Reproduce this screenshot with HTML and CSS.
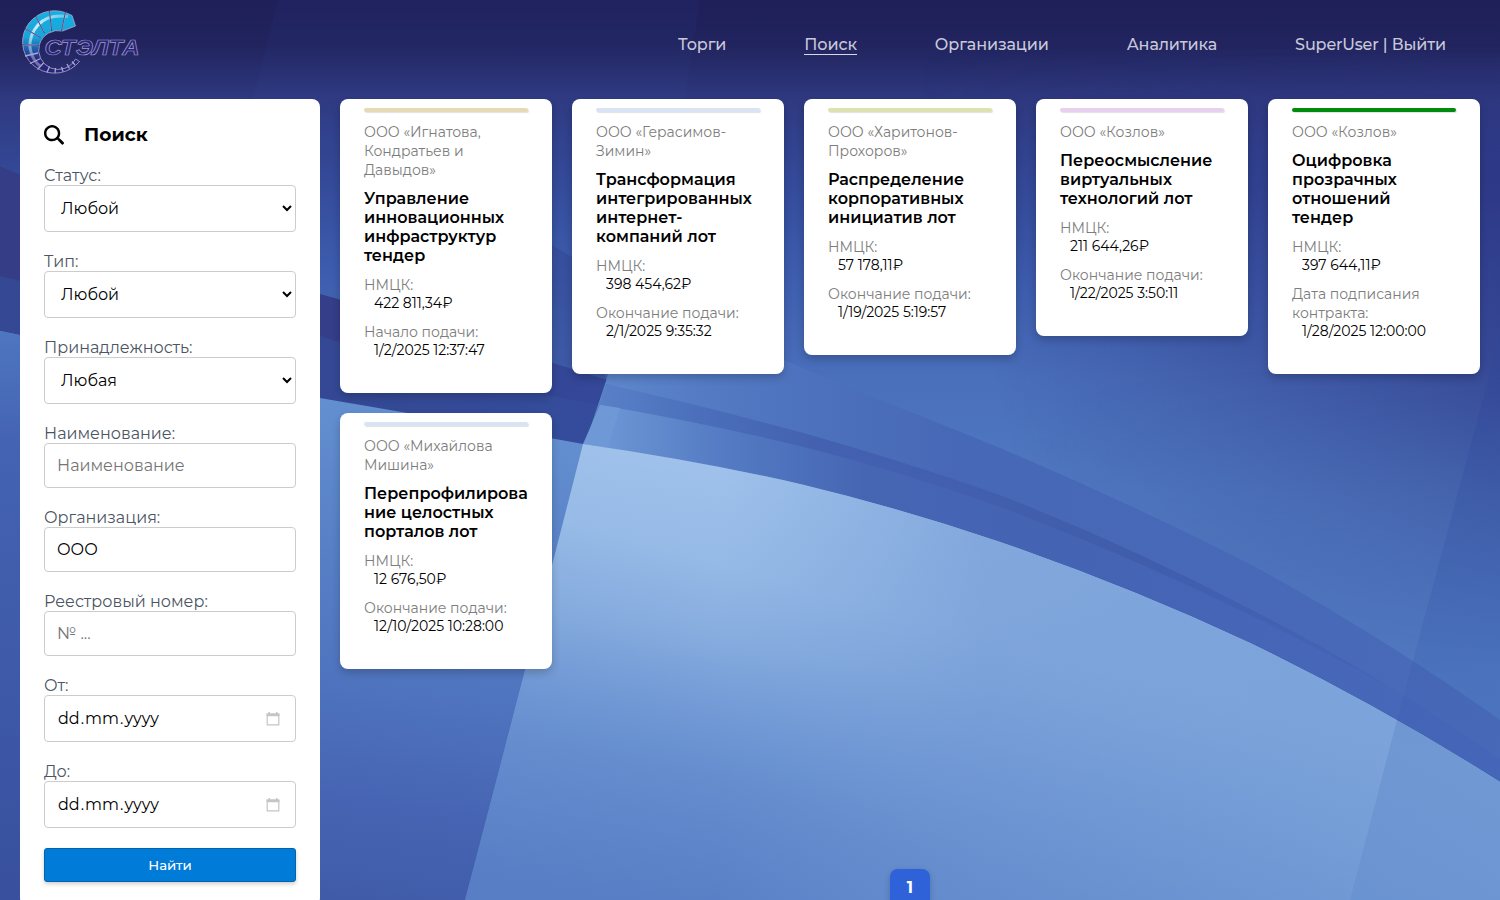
FILE: index.html
```html
<!DOCTYPE html>
<html lang="ru">
<head>
<meta charset="utf-8">
<title>Поиск</title>
<link rel="stylesheet" href="styles.css">
</head>
<body>
<svg class="backdrop" viewBox="0 0 1500 900" preserveAspectRatio="none" aria-hidden="true">
  <defs>
    <linearGradient id="sky" x1="0" y1="0" x2="0" y2="1">
      <stop offset="0" stop-color="#1f1f5a"/><stop offset=".05" stop-color="#21245e"/><stop offset=".11" stop-color="#2f3980"/>
      <stop offset=".2" stop-color="#344a99"/><stop offset=".3" stop-color="#3d5cad"/><stop offset=".42" stop-color="#4a6fbb"/><stop offset=".55" stop-color="#5079c1"/><stop offset="1" stop-color="#5279c2"/>
    </linearGradient>
    <linearGradient id="edge" gradientUnits="userSpaceOnUse" x1="1000" y1="400" x2="1500" y2="270">
      <stop offset="0" stop-color="#2a2f7c" stop-opacity="0"/><stop offset="1" stop-color="#2a2f7c" stop-opacity=".62"/>
    </linearGradient>
    <linearGradient id="fade" x1="0" y1="0" x2="0" y2="1"><stop offset=".05" stop-color="#000"/><stop offset=".2" stop-color="#fff"/><stop offset=".4" stop-color="#fff"/><stop offset=".75" stop-color="#000"/></linearGradient>
    <mask id="upper"><rect width="1500" height="900" fill="url(#fade)"/></mask>
    <linearGradient id="ribbon" gradientUnits="userSpaceOnUse" x1="590" y1="0" x2="1500" y2="0">
      <stop offset="0" stop-color="#6089cd"/><stop offset=".12" stop-color="#547bc4"/><stop offset=".25" stop-color="#4d71bd"/><stop offset=".4" stop-color="#4768b6"/><stop offset=".8" stop-color="#4869b8"/><stop offset="1" stop-color="#4a6bb9"/>
    </linearGradient>
    <linearGradient id="ribbonLow" gradientUnits="userSpaceOnUse" x1="590" y1="0" x2="1500" y2="0">
      <stop offset="0" stop-color="#6f99d6"/><stop offset=".14" stop-color="#557cc4"/><stop offset=".3" stop-color="#4666b4"/><stop offset=".5" stop-color="#4463b3"/><stop offset="1" stop-color="#4868ba"/>
    </linearGradient>
    <linearGradient id="strand" gradientUnits="userSpaceOnUse" x1="590" y1="0" x2="1500" y2="0">
      <stop offset="0" stop-color="#5a82c8"/><stop offset=".12" stop-color="#4b6fbb"/><stop offset=".25" stop-color="#4361b0"/><stop offset=".6" stop-color="#405dac"/><stop offset="1" stop-color="#4868ba"/>
    </linearGradient>
    <linearGradient id="hill" gradientUnits="userSpaceOnUse" x1="420" y1="400" x2="340" y2="900">
      <stop offset="0" stop-color="#6490d0"/><stop offset=".35" stop-color="#567ec5"/><stop offset=".55" stop-color="#5075c0"/><stop offset=".8" stop-color="#4664b3"/><stop offset="1" stop-color="#405ca9"/>
    </linearGradient>
    <linearGradient id="left" gradientUnits="userSpaceOnUse" x1="0" y1="330" x2="0" y2="900">
      <stop offset="0" stop-color="#4f76c0"/><stop offset=".2" stop-color="#4463b3"/><stop offset="1" stop-color="#38509e"/>
    </linearGradient>
    <linearGradient id="lit" gradientUnits="userSpaceOnUse" x1="700" y1="450" x2="620" y2="900">
      <stop offset="0" stop-color="#a0c2eb"/><stop offset=".4" stop-color="#8fb4e3"/><stop offset=".65" stop-color="#729ad6"/><stop offset="1" stop-color="#4b6dba"/>
    </linearGradient>
    <linearGradient id="litRight" gradientUnits="userSpaceOnUse" x1="720" y1="0" x2="1380" y2="0">
      <stop offset="0" stop-color="#7ba3da" stop-opacity="0"/><stop offset=".4" stop-color="#789fd8" stop-opacity=".75"/><stop offset="1" stop-color="#7ca4da"/>
    </linearGradient>
    <linearGradient id="low" gradientUnits="userSpaceOnUse" x1="1150" y1="680" x2="1080" y2="940">
      <stop offset="0" stop-color="#5f88cb" stop-opacity="0"/><stop offset="1" stop-color="#5f88cb" stop-opacity=".65"/>
    </linearGradient>
    <linearGradient id="dusk" gradientUnits="userSpaceOnUse" x1="0" y1="180" x2="600" y2="420">
      <stop offset="0" stop-color="#343d86"/><stop offset=".6" stop-color="#343e89"/><stop offset="1" stop-color="#34489a"/>
    </linearGradient>
    <linearGradient id="shade" gradientUnits="userSpaceOnUse" x1="0" y1="400" x2="0" y2="900">
      <stop offset="0" stop-color="#2c459a" stop-opacity=".3"/><stop offset="1" stop-color="#3a68b8" stop-opacity=".12"/>
    </linearGradient>
  </defs>
  <rect width="1500" height="900" fill="url(#sky)"/>
  <rect width="1500" height="900" fill="url(#edge)" mask="url(#upper)"/>
  <path d="M278 0 L700 0 L677 150 L240 150Z" fill="#3c5cae" opacity=".07"/>
  <path d="M540 238 L580 262 L607 382 L540 370Z" fill="#30438f" opacity=".45"/>
  <path d="M0 166 Q170 240 320 294 Q450 330 607 380 L583 450 L0 400Z" fill="url(#dusk)"/>
  <path d="M0 276 Q160 318 320 336 Q450 378 600 405 L583 444 L320 398 L0 331Z" fill="#35509d" opacity=".6"/>
  <path d="M612 363 Q700 340 784 360 C860 393 920 415 1000 448 Q1130 503 1250 564 Q1380 635 1500 720 V800 L583 450Z" fill="url(#ribbon)"/>
  <path d="M606 384 Q700 405 800 432 Q900 460 1000 495 Q1130 546 1250 609 Q1340 655 1404 696 L1500 762 V800 L583 450Z" fill="url(#strand)"/>
  <path d="M600 405 Q700 422 800 446 Q900 471 1000 507 Q1130 556 1250 615 Q1340 659 1404 696 L1500 758 V800 L583 450 L589 444Z" fill="url(#ribbonLow)"/>
  <path d="M600 405 L583 444 L605 455 L620 408Z" fill="#6f99d6"/>
  <path d="M0 331 C160 365 240 382 320 398 Q450 420 583 444 Q700 461 800 484 Q900 508 1000 542 Q1130 587 1250 643 Q1380 706 1500 782 V900 H0Z" fill="url(#hill)"/>
  <path d="M0 331 L20 335 V900 H0Z" fill="url(#left)"/>
  <path d="M583 444 Q700 461 800 484 Q900 508 1000 542 Q1130 587 1250 643 Q1380 706 1500 782 V900 H465 Q523 680 583 444Z" fill="url(#lit)"/>
  <path d="M583 444 Q700 461 800 484 Q900 508 1000 542 Q1130 587 1250 643 Q1380 706 1500 782 V900 H465 Q523 680 583 444Z" fill="url(#litRight)"/>
  <path d="M583 444 Q700 461 800 484 Q900 508 1000 542 Q1130 587 1250 643 Q1380 706 1500 782 V900 H465 Q523 680 583 444Z" fill="url(#low)"/>
  <path d="M1500 335 L1488 380 L1397 720 L1350 900 H1500Z" fill="url(#shade)"/>
</svg>

<header class="topbar">
  <svg class="logo" viewBox="20 9 122 67" role="img" aria-label="СТЭЛТА">
    <defs>
      <linearGradient id="ring" x1="0" y1="0" x2="0" y2="1"><stop offset="0" stop-color="#14b0e2"/><stop offset=".42" stop-color="#1aa5da"/><stop offset=".62" stop-color="#1d5cae"/><stop offset=".78" stop-color="#25257c"/></linearGradient>
      <linearGradient id="shine" x1="1" y1="0" x2="0" y2="1"><stop offset="0" stop-color="#fff" stop-opacity=".3"/><stop offset=".5" stop-color="#fff" stop-opacity=".8"/><stop offset="1" stop-color="#fff" stop-opacity=".2"/></linearGradient>
    </defs>
    <path d="M66 12.800 L72 15.500 L75.500 26 L62.500 31 A19.500 19.500 0 1 0 75.500 59 L79.500 61.500 A32 31.200 0 1 1 66 12.800Z" fill="url(#ring)" stroke="#b0a6cc" stroke-width=".8"/>
    <path d="M68 16.500 Q48 14 38 25 Q29 35 30 48 Q32 60 40 66" fill="none" stroke="url(#shine)" stroke-width="3"/>
    <path class="logo-cuts" d="M65.500 13.500L61.500 30M49.500 12L51.500 29.500M36 17L44 32M26 29L39.500 37M22.500 44.500L38.500 45.500M25 56L38 53M30 63.500L40.500 58.500M37.500 69.500L43.500 63M47 72.500L49.500 66.500M55 73L55.500 68M63 71.500L61.500 67M69.500 68.500L67 64M75 65L72 61.500"/>
    <path class="logo-gap" d="M65.700 11L61.300 31.500M49.300 10L51.700 31M35.500 16L44.500 33.200M25 28.500L40.500 37.600M21 44.500L39.500 45.500"/>
    <text class="logo-text" x="44.500" y="54.500" textLength="95" lengthAdjust="spacingAndGlyphs">СТЭЛТА</text>
  </svg>
  <nav class="menu">
    <a class="menu-item">Торги</a>
    <a class="menu-item current">Поиск</a>
    <a class="menu-item">Организации</a>
    <a class="menu-item">Аналитика</a>
    <a class="menu-item">SuperUser | Выйти</a>
  </nav>
</header>

<main class="page">
  <form class="filter">
    <h3 class="filter-title">
      <svg viewBox="0 0 512 512" width="20" height="20"><path d="M505 442.700 405.300 343c-4.500-4.500-10.600-7-17-7H372c27.600-35.300 44-79.700 44-128C416 93.100 322.900 0 208 0S0 93.100 0 208s93.100 208 208 208c48.300 0 92.700-16.400 128-44l107 112c9.400 9.400 24.600 24.600 33.900 24l28.300-28.300c9.400-9.400 9.400-24.600.1-34zM208 354c-80 0-146-66-146-146S128 62 208 62s146 66 146 146-66 146-146 146z"/></svg>
      <span>Поиск</span>
    </h3>
    <div class="field"><label>Статус:</label><select class="control"><option>Любой</option></select></div>
    <div class="field"><label>Тип:</label><select class="control"><option>Любой</option></select></div>
    <div class="field"><label>Принадлежность:</label><select class="control"><option>Любая</option></select></div>
    <div class="field"><label>Наименование:</label><input class="control short" placeholder="Наименование"></div>
    <div class="field"><label>Организация:</label><input class="control short" value="ООО"></div>
    <div class="field"><label>Реестровый номер:</label><input class="control short" placeholder="№ ..."></div>
    <div class="field"><label>От:</label><div class="control date"><span><i>dd</i>.<i>mm</i>.<i>yyyy</i></span><svg viewBox="0 0 14 14" width="14" height="14"><path d="M1.200 2v10.800h11.600V2" fill="none" stroke="#c5c5c5" stroke-width="1.200"/><path d="M.6 1.200h12.800v3.100H.6zM2.500 0h1.500v2H2.500zM10 0h1.500v2H10z" fill="#c5c5c5"/></svg></div></div>
    <div class="field"><label>До:</label><div class="control date"><span><i>dd</i>.<i>mm</i>.<i>yyyy</i></span><svg viewBox="0 0 14 14" width="14" height="14"><path d="M1.200 2v10.800h11.600V2" fill="none" stroke="#c5c5c5" stroke-width="1.200"/><path d="M.6 1.200h12.800v3.100H.6zM2.500 0h1.500v2H2.500zM10 0h1.500v2H10z" fill="#c5c5c5"/></svg></div></div>
    <button class="submit" type="button">Найти</button>
  </form>

  <section class="results">
    <div class="cards">
      <article class="card sand"><p class="org">ООО «Игнатова, Кондратьев и Давыдов»</p>
        <h3 class="name">Управление инновационных инфраструктур тендер</h3>
        <dl><dt>НМЦК:</dt><dd>422 811,34₽</dd><dt>Начало подачи:</dt><dd>1/2/2025 12:37:47</dd></dl></article>
      <article class="card sky"><p class="org">ООО «Герасимов-Зимин»</p>
        <h3 class="name">Трансформация интегрированных интернет-компаний лот</h3>
        <dl><dt>НМЦК:</dt><dd>398 454,62₽</dd><dt>Окончание подачи:</dt><dd>2/1/2025 9:35:32</dd></dl></article>
      <article class="card lime"><p class="org">ООО «Харитонов-Прохоров»</p>
        <h3 class="name">Распределение корпоративных инициатив лот</h3>
        <dl><dt>НМЦК:</dt><dd>57 178,11₽</dd><dt>Окончание подачи:</dt><dd>1/19/2025 5:19:57</dd></dl></article>
      <article class="card pink"><p class="org">ООО «Козлов»</p>
        <h3 class="name">Переосмысление виртуальных технологий лот</h3>
        <dl><dt>НМЦК:</dt><dd>211 644,26₽</dd><dt>Окончание подачи:</dt><dd>1/22/2025 3:50:11</dd></dl></article>
      <article class="card green"><p class="org">ООО «Козлов»</p>
        <h3 class="name">Оцифровка прозрачных отношений тендер</h3>
        <dl><dt>НМЦК:</dt><dd>397 644,11₽</dd><dt>Дата подписания контракта:</dt><dd>1/28/2025 12:00:00</dd></dl></article>
      <article class="card mist"><p class="org">ООО «Михайлова Мишина»</p>
        <h3 class="name">Перепрофилирование целостных порталов лот</h3>
        <dl><dt>НМЦК:</dt><dd>12 676,50₽</dd><dt>Окончание подачи:</dt><dd>12/10/2025 10:28:00</dd></dl></article>
    </div>
    <div class="pager"><a class="page-link">1</a></div>
  </section>
</main>
</body>
</html>
```
FILE: styles.css
```css
* { box-sizing: border-box; }
body {
  margin: 0;
  height: 900px;
  overflow: hidden;
  position: relative;
  color: #000;
  font-family: Montserrat, Inter, "Noto Sans", sans-serif;
  font-size: 16px;
}
.backdrop { position: absolute; inset: 0; width: 1500px; height: 900px; z-index: -1; }
.topbar { display: flex; justify-content: space-between; height: 99px; padding: 9px 54px 0 20px; }
.logo { width: 122px; height: 67px; }
.logo-cuts { fill: none; stroke: #b0a6cc; stroke-width: 1.3; }
.logo-gap { fill: none; stroke: #262966; stroke-width: .7; }
.logo-text {
  font: italic bold 22px "Liberation Sans", Arial, sans-serif;
  fill: #25257e; stroke: #a79bc6; stroke-width: .7;
}
.menu { display: flex; gap: 78px; padding-top: 25px; }
.menu-item { height: 21px; line-height: 21px; color: #c8c8d9; font-weight: 500; letter-spacing: -.13px; white-space: nowrap; }
.menu-item.current { border-bottom: 1px solid #d8d8e6; }
.page { display: flex; gap: 20px; padding: 0 20px; align-items: flex-start; }
.filter { flex: 0 0 300px; height: 807px; padding: 24px; background: #fff; border-radius: 8px; }
.filter-title { display: flex; align-items: center; gap: 20px; height: 23px; margin: 0 0 20px; font-size: 18.72px; font-weight: 700; }
.field { margin-bottom: 20px; }
.field label { display: block; height: 19px; line-height: 20px; color: #4b5563; }
.control {
  display: block; width: 100%; height: 47px; padding: 12px;
  font: inherit; color: #000; background: #fff; border: 1px solid #ccc; border-radius: 4px;
}
.short { height: 45px; }
.control::placeholder { color: #757575; }
.date { display: flex; align-items: center; justify-content: space-between; padding: 0 15px 0 12px; }
.date i { padding: 0 1px; font-style: normal; }
.submit {
  display: block; width: 100%; height: 34px; padding: 0;
  color: #fff; background: #007bd7; border: 1px solid #0063ad; border-radius: 3px;
  box-shadow: 0 2px 4px rgba(0, 0, 0, .2);
  font: 500 13.333px Montserrat, Inter, sans-serif;
  letter-spacing: -.1px;
}
.results { flex: 1; }
.cards { display: grid; grid-template-columns: repeat(5, 212px); gap: 20px; align-items: start; }
.card { padding: 9px 24px 34px; background: #fff; border-radius: 8px; box-shadow: 0 4px 8px rgba(0, 0, 0, .2); overflow-wrap: anywhere; }
.card::before { content: ""; display: block; height: 4px; margin-bottom: 11px; border-radius: 2px; background: var(--tone); box-shadow: 1px 1px 1px rgba(0, 0, 0, .12); }
.sand { --tone: #e5d9b6; }
.sky { --tone: #d9e3f3; }
.lime { --tone: #dce2b0; }
.pink { --tone: #e8d0ef; }
.green { --tone: #008a0e; }
.mist { --tone: #d8e4ef; }
.org, dl dt { color: #7d7d7d; font-size: 14px; line-height: 19px; }
.org { margin: 0 0 9px; }
.name { margin: 0 0 11px; font-size: 16px; font-weight: 600; line-height: 19px; }
dl { margin: 0; }
dl dd { margin: -1px 0 11px 10px; font-size: 14px; line-height: 18px; }
dl dd:last-child { margin-bottom: 0; }
.pager { display: flex; justify-content: center; margin-top: 200px; }
.page-link {
  width: 40px; height: 40px; border-radius: 8px; background: #2f61d9; color: #fff;
  font-size: 16px; font-weight: 700; line-height: 37px; text-align: center; box-shadow: 0 2px 6px rgba(0, 0, 0, .2);
}
```
